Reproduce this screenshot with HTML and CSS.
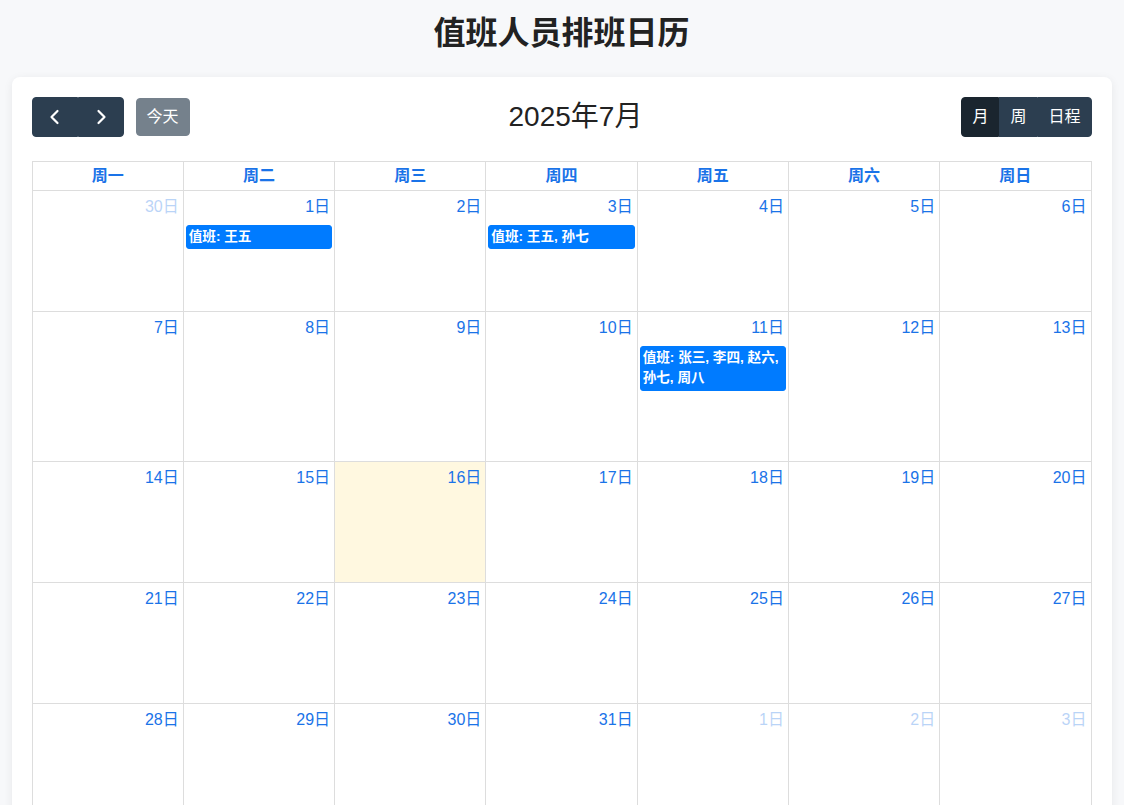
FILE: index.html
```html
<!DOCTYPE html>
<html lang="zh-CN">
<head>
<meta charset="UTF-8" />
<meta name="viewport" content="width=device-width,initial-scale=1.0" />
<title>值班人员排班日历</title>
<link rel="stylesheet" href="styles.css">
</head>
<body>
  <div class="page">
    <h1>值班人员排班日历</h1>

    <div class="card">
      <div class="toolbar">
        <div class="chunk">
          <div class="btn-group">
            <button class="btn icon" aria-label="prev">
              <svg width="16" height="16" viewBox="0 0 16 16"><polyline points="10.5,2 4.5,8 10.5,14" fill="none" stroke="#fff" stroke-width="2.2" stroke-linecap="round" stroke-linejoin="round"/></svg>
            </button>
            <button class="btn icon" aria-label="next">
              <svg width="16" height="16" viewBox="0 0 16 16"><polyline points="5.5,2 11.5,8 5.5,14" fill="none" stroke="#fff" stroke-width="2.2" stroke-linecap="round" stroke-linejoin="round"/></svg>
            </button>
          </div>
          <button class="btn today" disabled>今天</button>
        </div>
        <h2 class="title">2025年7月</h2>
        <div class="chunk">
          <div class="btn-group">
            <button class="btn active">月</button>
            <button class="btn">周</button>
            <button class="btn">日程</button>
          </div>
        </div>
      </div>

      <div class="cal">
        <div class="head">周一</div>
        <div class="head">周二</div>
        <div class="head">周三</div>
        <div class="head">周四</div>
        <div class="head">周五</div>
        <div class="head">周六</div>
        <div class="head">周日</div>

        <!-- week 1 -->
        <div class="day other"><span class="num">30日</span></div>
        <div class="day"><span class="num">1日</span><div class="event">值班: 王五</div></div>
        <div class="day"><span class="num">2日</span></div>
        <div class="day"><span class="num">3日</span><div class="event">值班: 王五, 孙七</div></div>
        <div class="day"><span class="num">4日</span></div>
        <div class="day"><span class="num">5日</span></div>
        <div class="day"><span class="num">6日</span></div>

        <!-- week 2 -->
        <div class="day tall"><span class="num">7日</span></div>
        <div class="day tall"><span class="num">8日</span></div>
        <div class="day tall"><span class="num">9日</span></div>
        <div class="day tall"><span class="num">10日</span></div>
        <div class="day tall"><span class="num">11日</span><div class="event">值班: 张三, 李四, 赵六, 孙七, 周八</div></div>
        <div class="day tall"><span class="num">12日</span></div>
        <div class="day tall"><span class="num">13日</span></div>

        <!-- week 3 -->
        <div class="day"><span class="num">14日</span></div>
        <div class="day"><span class="num">15日</span></div>
        <div class="day today-cell"><span class="num">16日</span></div>
        <div class="day"><span class="num">17日</span></div>
        <div class="day"><span class="num">18日</span></div>
        <div class="day"><span class="num">19日</span></div>
        <div class="day"><span class="num">20日</span></div>

        <!-- week 4 -->
        <div class="day"><span class="num">21日</span></div>
        <div class="day"><span class="num">22日</span></div>
        <div class="day"><span class="num">23日</span></div>
        <div class="day"><span class="num">24日</span></div>
        <div class="day"><span class="num">25日</span></div>
        <div class="day"><span class="num">26日</span></div>
        <div class="day"><span class="num">27日</span></div>

        <!-- week 5 -->
        <div class="day"><span class="num">28日</span></div>
        <div class="day"><span class="num">29日</span></div>
        <div class="day"><span class="num">30日</span></div>
        <div class="day"><span class="num">31日</span></div>
        <div class="day other"><span class="num">1日</span></div>
        <div class="day other"><span class="num">2日</span></div>
        <div class="day other"><span class="num">3日</span></div>
      </div>
    </div>
  </div>
</body>
</html>
```

FILE: styles.css
```css
html { overflow:hidden; }
body { margin:0; background:#f7f8fa; color:#222; font-family:"Liberation Sans", Arial, "Noto Sans CJK SC", sans-serif; font-size:16px; }
.page { max-width:1100px; margin:0 auto; padding-right:1px; }
h1 { margin:14px 0 25px; font-size:32px; line-height:38px; text-align:center; font-weight:700; color:#222; }

.card { background:#fff; border-radius:8px; padding:20px; box-shadow:0 2px 10px rgba(0,0,0,.07); }

/* toolbar */
.toolbar { display:flex; justify-content:space-between; align-items:center; margin-bottom:24px; }
.chunk { display:flex; align-items:center; }
.title { margin:0; font-size:28px; font-weight:400; line-height:1.2; color:#222; }
.btn-group { display:flex; }
.btn { font:inherit; font-size:16px; line-height:24px; padding:7px 10px; border:1px solid #2c3e50; background:#2c3e50; color:#fff; border-radius:0; cursor:pointer; }
.btn-group .btn:first-child { border-radius:4px 0 0 4px; }
.btn-group .btn:last-child { border-radius:0 4px 4px 0; }
.btn.icon { width:46px; display:grid; place-items:center; padding:7px 0; height:40px; }
.btn.active { background:#1a252f; border-color:#1a252f; }
.btn.today { margin-left:12px; border-radius:4px; opacity:.65; cursor:default; padding:6px 10px; }

/* month grid */
.cal { display:grid; grid-template-columns:repeat(7, 1fr); border-top:1px solid #ddd; border-left:1px solid #ddd; }
.head { border-right:1px solid #ddd; border-bottom:1px solid #ddd; text-align:center; padding:2px 4px; line-height:24px; font-weight:700; color:#1a73e8; }
.day { border-right:1px solid #ddd; border-bottom:1px solid #ddd; min-height:120px; display:flex; flex-direction:column; }
.day.tall { min-height:149px; }
.day.today-cell { background:#fff8e0; }
.num { align-self:flex-end; padding:4px; line-height:24px; color:#1a73e8; }
.day.other .num { opacity:.3; }
.event { margin:2px 2px 0; background:#007bff; border:1px solid #007bff; border-radius:3px; color:#fff; font-size:13.6px; font-weight:700; line-height:20.4px; padding:1px 2px; }
```
